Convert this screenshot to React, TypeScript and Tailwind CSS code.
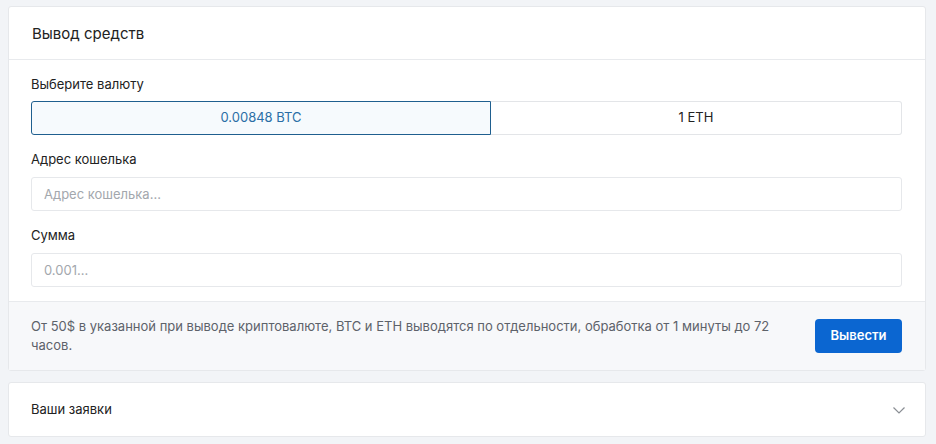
import React from "react";

export default function App() {
  return (
    <div
      className="min-h-[444px] w-full bg-[#f2f4f7] px-2 pt-[6px] pb-2 text-[#222]"
      style={{ fontFamily: "Inter, 'Noto Sans', sans-serif" }}
    >
      <div className="w-[918px] rounded-[3px] border border-[#e6e8eb] bg-white">
        <div className="flex h-[53px] items-center border-b border-[#e8eaed] px-[23px]">
          <h2 className="text-[15px] font-normal leading-none text-[#222]">Вывод средств</h2>
        </div>
        <div className="pl-[22px] pr-[23px] pt-[15px] pb-[14px]">
          <div className="mb-2 text-[13px] leading-[18px] text-[#222]">Выберите валюту</div>
          <div className="flex">
            <button className="h-[34px] w-[460px] shrink-0 rounded-l-[3px] border border-[#1f5f8f] bg-[#f6fafd] text-[13px] text-[#2a6ea6]">
              0.00848 BTC
            </button>
            <button className="h-[34px] flex-1 rounded-r-[3px] border border-l-0 border-[#e3e5e8] bg-white text-[13px] text-[#222]">
              1 ETH
            </button>
          </div>
          <div className="mt-[15px] mb-[9px] text-[13px] leading-[18px] text-[#222]">Адрес кошелька</div>
          <input
            className="h-[34px] w-full rounded-[3px] border border-[#e6e8eb] px-3 text-[13px] outline-none placeholder:text-[#a3a7ad]"
            placeholder="Адрес кошелька..."
          />
          <div className="mt-[15px] mb-[9px] text-[13px] leading-[18px] text-[#222]">Сумма</div>
          <input
            className="h-[34px] w-full rounded-[3px] border border-[#e6e8eb] px-3 text-[13px] outline-none placeholder:text-[#a3a7ad]"
            placeholder="0.001..."
          />
        </div>
        <div className="flex h-[69px] items-center gap-6 border-t border-[#e8eaed] bg-[#f7f8fa] pl-[22px] pr-[23px]">
          <p className="flex-1 text-[13px] leading-[19px] text-[#5d626a]">
            От 50$ в указанной при выводе криптовалюте, BTC и ETH выводятся по отдельности, обработка от 1 минуты до 72 часов.
          </p>
          <button className="h-[34px] w-[87px] rounded-[4px] bg-[#0b66d1] text-[13px] font-semibold text-white">
            Вывести
          </button>
        </div>
      </div>
      <div className="mt-[11px] flex h-[55px] w-[918px] items-center justify-between rounded-[3px] border border-[#e6e8eb] bg-white pl-[22px] pr-[19px]">
        <span className="text-[13px] text-[#222]">Ваши заявки</span>
        <svg width="14" height="14" viewBox="0 0 14 14" fill="none">
          <path d="M1.5 4.5 L7 10 L12.5 4.5" stroke="#8a8e94" strokeWidth="1.2" />
        </svg>
      </div>
    </div>
  );
}
